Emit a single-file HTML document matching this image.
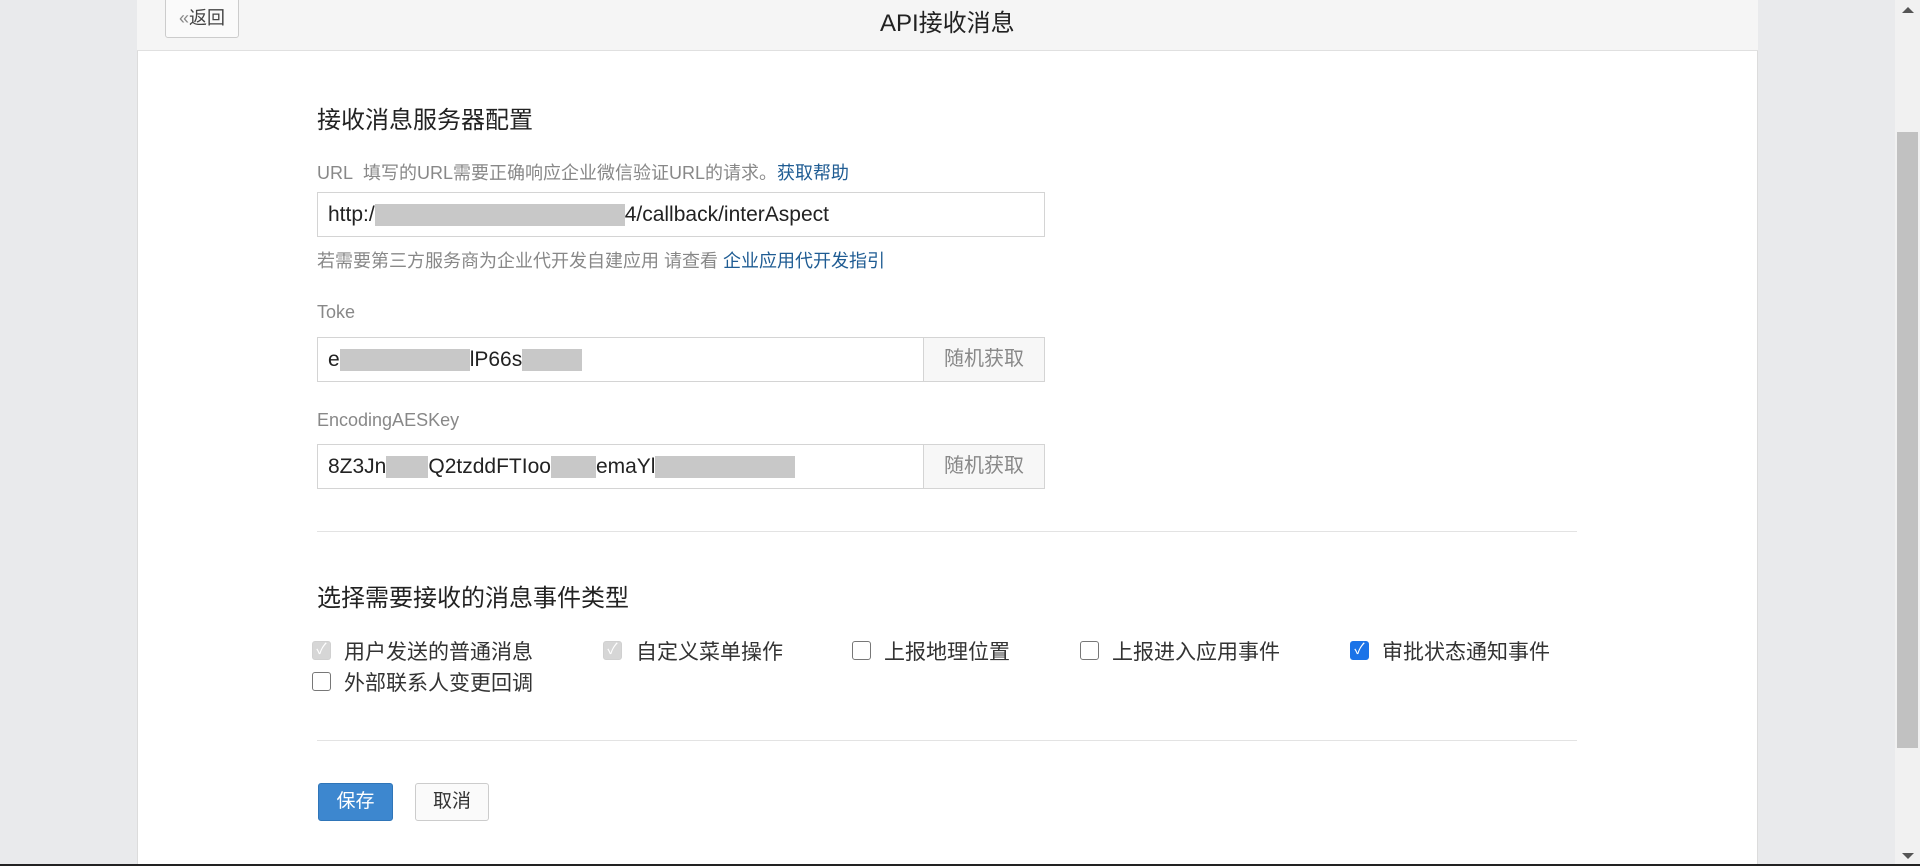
<!DOCTYPE html>
<html><head><meta charset="utf-8"><style>
*{margin:0;padding:0;box-sizing:border-box}
body{width:1920px;height:866px;overflow:hidden;background:#e9eaec;font-family:"Liberation Sans","Noto Sans CJK SC",sans-serif;position:relative;color:#333}
.a{position:absolute}
.panel{left:137px;top:0;width:1621px;height:864px;background:#fff;border-left:1px solid #dcdcdc;border-right:1px solid #dcdcdc}
.hdr{left:137px;top:0;width:1621px;height:51px;background:#f5f5f5;border-bottom:1px solid #e0e0e0}
.t{white-space:nowrap}
.inp{border:1px solid #d4d4d4;background:#fff;height:45px;font-size:21px;color:#222;padding:0 10px;line-height:43px}
.rbtn{border-left:1px solid #d4d4d4;background:#f7f7f7;color:#888;font-size:20px;text-align:center;line-height:43px}
.lbl{font-size:18px;color:#888}
.cb{width:19px;height:19px;border:1.5px solid #777;border-radius:3px;background:#fff;color:#fff;font-size:15px;line-height:16px;text-align:center}
.cbd{background:#d6d6d6;border-color:#d0d0d0}
.cbc{background:#1a73e8;border-color:#1a73e8}
.cl{font-size:21px;color:#333}
</style></head><body>
<div class="a panel"></div>
<div class="a hdr"></div>
<div class="a" style="left:165px;top:-1px;width:74px;height:39px;border:1px solid #ccc;border-radius:0 0 3px 3px;background:#fafafa;font-size:18px;line-height:37px;text-align:center;color:#444"><span style="color:#888">«</span>返回</div>
<div class="a t" style="left:880px;top:3px;font-size:24px;color:#222">API接收消息</div>

<div class="a t" style="left:317px;top:100px;font-size:24px;color:#222">接收消息服务器配置</div>
<div class="a t lbl" style="left:317px;top:159px">URL&nbsp; 填写的URL需要正确响应企业微信验证URL的请求。<span style="color:#1f5c93">获取帮助</span></div>
<div class="a inp" style="left:317px;top:192px;width:728px">http:/<span style="display:inline-block;width:250px;height:22px;vertical-align:middle;background:#c8c8c8"></span>4/callback/interAspect</div>
<div class="a t lbl" style="left:317px;top:247px">若需要第三方服务商为企业代开发自建应用 请查看 <span style="color:#1f5c93">企业应用代开发指引</span></div>

<div class="a t lbl" style="left:317px;top:302px">Toke</div>
<div class="a inp" style="left:317px;top:337px;width:728px;padding:0">
<span style="padding-left:10px">e</span><span style="display:inline-block;width:130px;height:22px;vertical-align:middle;background:#c8c8c8"></span>lP66s<span style="display:inline-block;width:60px;height:22px;vertical-align:middle;background:#c8c8c8"></span>
<div class="a rbtn" style="right:0;top:0;width:121px;height:43px">随机获取</div></div>

<div class="a t lbl" style="left:317px;top:410px">EncodingAESKey</div>
<div class="a inp" style="left:317px;top:444px;width:728px;padding:0">
<span style="padding-left:10px">8Z3Jn</span><span style="display:inline-block;width:42px;height:22px;vertical-align:middle;background:#c8c8c8"></span>Q2tzddFTIoo<span style="display:inline-block;width:45px;height:22px;vertical-align:middle;background:#c8c8c8"></span>emaYl<span style="display:inline-block;width:140px;height:22px;vertical-align:middle;background:#c8c8c8"></span>
<div class="a rbtn" style="right:0;top:0;width:121px;height:43px">随机获取</div></div>

<div class="a" style="left:317px;top:531px;width:1260px;height:1px;background:#e3e3e3"></div>
<div class="a t" style="left:317px;top:578px;font-size:24px;color:#222">选择需要接收的消息事件类型</div>

<div class="a cb cbd" style="left:312px;top:641px">✓</div><div class="a t cl" style="left:344px;top:636px">用户发送的普通消息</div>
<div class="a cb cbd" style="left:603px;top:641px">✓</div><div class="a t cl" style="left:636px;top:636px">自定义菜单操作</div>
<div class="a cb" style="left:852px;top:641px"></div><div class="a t cl" style="left:884px;top:636px">上报地理位置</div>
<div class="a cb" style="left:1080px;top:641px"></div><div class="a t cl" style="left:1112px;top:636px">上报进入应用事件</div>
<div class="a cb cbc" style="left:1350px;top:641px">✓</div><div class="a t cl" style="left:1382px;top:636px">审批状态通知事件</div>
<div class="a cb" style="left:312px;top:672px"></div><div class="a t cl" style="left:344px;top:667px">外部联系人变更回调</div>

<div class="a" style="left:317px;top:740px;width:1260px;height:1px;background:#e3e3e3"></div>
<div class="a" style="left:318px;top:783px;width:75px;height:38px;background:#3d87cf;border:1px solid #2f75b8;border-radius:3px;color:#fff;font-size:19px;line-height:36px;text-align:center">保存</div>
<div class="a" style="left:415px;top:783px;width:74px;height:38px;background:#fafafa;border:1px solid #ccc;border-radius:3px;color:#333;font-size:19px;line-height:36px;text-align:center">取消</div>

<div class="a" style="left:1895px;top:0;width:25px;height:864px;background:#f1f1f1"></div>
<div class="a" style="left:1897px;top:132px;width:21px;height:616px;background:#c1c1c1"></div>
<div class="a" style="left:1902px;top:7px;width:0;height:0;border-left:6px solid transparent;border-right:6px solid transparent;border-bottom:6px solid #555"></div>
<div class="a" style="left:1902px;top:853px;width:0;height:0;border-left:6px solid transparent;border-right:6px solid transparent;border-top:6px solid #555"></div>
<div class="a" style="left:0;top:864px;width:1920px;height:2px;background:#222"></div>
</body></html>
